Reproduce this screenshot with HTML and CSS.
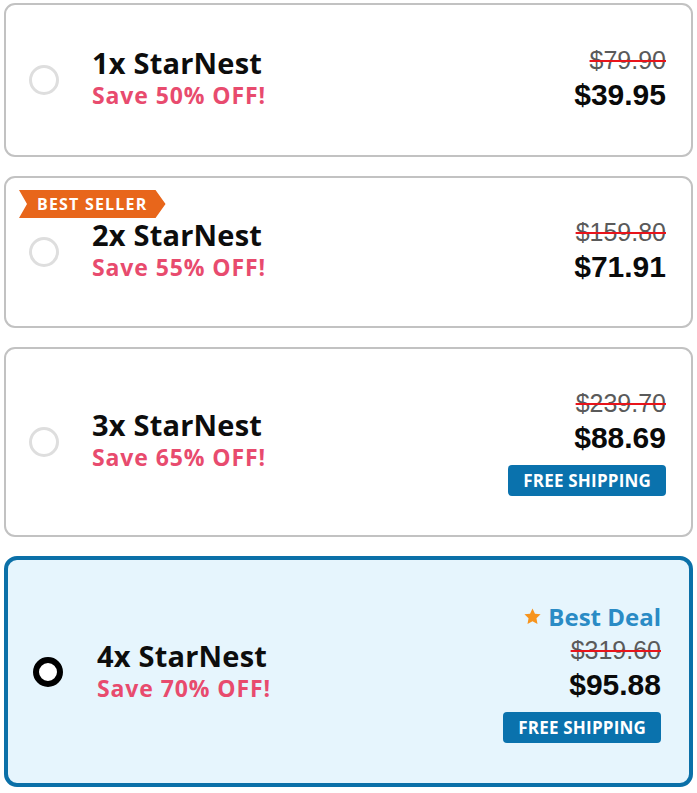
FILE: index.html
```html
<!DOCTYPE html>
<html lang="en">
<head>
<meta charset="utf-8">
<title>StarNest bundles</title>
<link rel="stylesheet" href="styles.css">
</head>
<body>
<div class="offers">
  <label class="card card-1">
    <span class="radio"></span>
    <div class="info">
      <div class="title">1x StarNest</div>
      <div class="save">Save 50% OFF!</div>
    </div>
    <div class="prices">
      <div class="old">$79.90</div>
      <div class="price">$39.95</div>
    </div>
  </label>

  <label class="card card-2">
    <span class="ribbon">BEST SELLER</span>
    <span class="radio"></span>
    <div class="info">
      <div class="title">2x StarNest</div>
      <div class="save">Save 55% OFF!</div>
    </div>
    <div class="prices">
      <div class="old">$159.80</div>
      <div class="price">$71.91</div>
    </div>
  </label>

  <label class="card card-3">
    <span class="radio"></span>
    <div class="info">
      <div class="title">3x StarNest</div>
      <div class="save">Save 65% OFF!</div>
    </div>
    <div class="prices">
      <div class="old">$239.70</div>
      <div class="price">$88.69</div>
      <div class="ship">FREE SHIPPING</div>
    </div>
  </label>

  <label class="card card-4 selected">
    <span class="radio"></span>
    <div class="info">
      <div class="title">4x StarNest</div>
      <div class="save">Save 70% OFF!</div>
    </div>
    <div class="prices">
      <div class="deal">
        <svg class="star" viewBox="0 0 24 24" width="19" height="19" aria-hidden="true"><path d="M12 1.8l3.1 6.6 7.1.9-5.2 5 1.3 7.1L12 17.9l-6.3 3.5 1.3-7.1-5.2-5 7.1-.9z" fill="#f7941d"/></svg>
        <span>Best Deal</span>
      </div>
      <div class="old">$319.60</div>
      <div class="price">$95.88</div>
      <div class="ship">FREE SHIPPING</div>
    </div>
  </label>
</div>
</body>
</html>
```

FILE: styles.css
```css
* { box-sizing: border-box; }

html, body {
  margin: 0;
  padding: 0;
  background: #ffffff;
}

body {
  font-family: "Open Sans", "Noto Sans", sans-serif;
  color: #111111;
}

.offers {
  padding: 3px 4px 0 4px;
  display: flex;
  flex-direction: column;
  gap: 19px;
}

.card {
  position: relative;
  display: flex;
  align-items: center;
  border: 2px solid #c2c2c2;
  border-radius: 11px;
  background: #ffffff;
  padding: 0 25px 0 23px;
  cursor: pointer;
}

.card-1 { height: 154px; }
.card-2 { height: 152px; }
.card-3 { height: 190px; }
.card-4 { height: 231px; }

.selected {
  border: 4px solid #0b70a8;
  background: #e6f5fd;
  border-radius: 13px;
  padding: 0 28px 0 25px;
}

.radio {
  flex: none;
  width: 30px;
  height: 30px;
  border-radius: 50%;
  border: 3px solid #dedede;
  background: #ffffff;
  margin-right: 33px;
}

.selected .radio {
  border: 6px solid #000000;
  margin-right: 34px;
}

.info {
  flex: 1;
  display: flex;
  flex-direction: column;
  padding-bottom: 6px;
}

.selected .info {
  padding-bottom: 2px;
}

.title {
  font-size: 29px;
  font-weight: 700;
  line-height: 35px;
  color: #0d0d0d;
  letter-spacing: 0.2px;
}

.save {
  font-size: 23px;
  font-weight: 700;
  line-height: 30px;
  color: #e84b6e;
  letter-spacing: 0.9px;
}

.prices {
  display: flex;
  flex-direction: column;
  align-items: flex-end;
}

.old {
  font-family: "Liberation Sans", Arial, sans-serif;
  font-size: 25px;
  line-height: 30px;
  color: #5a5a5a;
  text-decoration: line-through;
  text-decoration-color: #e8141b;
  text-decoration-thickness: 2px;
}

.price {
  font-family: "Liberation Sans", Arial, sans-serif;
  font-size: 30px;
  font-weight: 700;
  line-height: 40px;
  color: #0a0a0a;
}

.ship {
  margin-top: 7px;
  height: 31px;
  padding: 0 15px;
  border-radius: 4px;
  background: #0a72ad;
  color: #ffffff;
  font-size: 17px;
  font-weight: 700;
  line-height: 31px;
  letter-spacing: 0.2px;
}

.deal {
  display: flex;
  align-items: center;
  gap: 6px;
  font-size: 24px;
  font-weight: 700;
  line-height: 32px;
  margin-bottom: 2px;
  color: #2a8bc5;
}

.star { display: block; }

.ribbon {
  position: absolute;
  left: 13px;
  top: 12px;
  height: 28px;
  padding: 0 18px 0 18px;
  background: #e8661b;
  color: #ffffff;
  font-size: 16px;
  font-weight: 700;
  line-height: 28px;
  letter-spacing: 1.2px;
  clip-path: polygon(0 0, calc(100% - 10px) 0, 100% 50%, calc(100% - 10px) 100%, 0 100%, 8px 50%);
}
```
